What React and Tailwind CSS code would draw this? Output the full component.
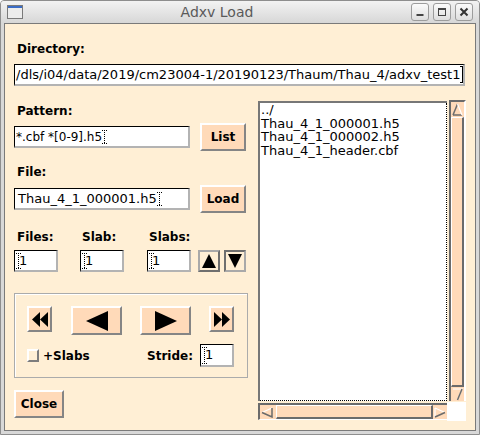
import React from "react";

// Tk-ish colours: PapayaWhip background, PeachPuff buttons
const raised =
  "bg-[#ffdab9] border-2 border-t-white border-l-white border-r-[#858585] border-b-[#858585]";
const sunkenInput =
  "bg-white border-t border-l border-r-2 border-b-2 border-t-black border-l-black border-r-[#b3b3b3] border-b-[#b3b3b3]";

function Cursor({ dotted, h = 14 }) {
  return (
    <svg width="5" height={h} viewBox={`0 0 5 ${h}`} className="shrink-0">
      <g stroke="#000" strokeWidth="1" strokeDasharray={dotted ? "1 1" : undefined}>
        <line x1="2.5" y1="0" x2="2.5" y2={h} />
        <line x1="0" y1="0.5" x2="5" y2="0.5" />
        <line x1="0" y1={h - 0.5} x2="5" y2={h - 0.5} />
      </g>
    </svg>
  );
}

function Label({ children, className = "" }) {
  return (
    <div className={`text-[12px] leading-[16px] font-bold text-black ${className}`}>
      {children}
    </div>
  );
}

function Btn({ children, className = "" }) {
  return (
    <div
      className={`${raised} flex items-center justify-center text-[12px] font-bold text-black ${className}`}
    >
      {children}
    </div>
  );
}

function SmallInput({ className = "" }) {
  return (
    <div className={`${sunkenInput} h-[22px] flex items-center pl-[1px] text-[13px] ${className}`}>
      <Cursor dotted h={16} />
      <span className="-ml-[2px]">1</span>
    </div>
  );
}

function TitleButton({ children }) {
  return (
    <div className="w-[18px] h-[18px] rounded-[3px] border border-[#9c9c9c] bg-gradient-to-b from-[#fbfbfb] to-[#dedede] flex items-center justify-center">
      {children}
    </div>
  );
}

export default function App() {
  return (
    <div className="w-[480px] h-[435px] flex flex-col bg-[#d8d8d8] border border-[#8e8e8e] rounded-t-[4px] overflow-hidden font-['DejaVu_Sans',sans-serif]">
      {/* title bar */}
      <div className="h-[22px] shrink-0 flex items-center bg-gradient-to-b from-[#f3f3f3] to-[#d7d7d7]">
        <svg width="16" height="14" viewBox="0 0 16 14" className="ml-[6px]">
          <rect x="0.5" y="0.5" width="15" height="13" fill="#ececec" stroke="#7a7a7a" />
          <rect x="1" y="1" width="14" height="2" fill="#3a6cc6" />
        </svg>
        <div className="flex-1 text-center text-[14px] leading-[22px] text-[#5a5a5a]">Adxv Load</div>
        <div className="flex items-center gap-[4px] mr-[6px]">
          <TitleButton>
            <svg width="10" height="10" viewBox="0 0 10 10">
              <rect x="1.5" y="7" width="7" height="2" fill="#444" />
            </svg>
          </TitleButton>
          <TitleButton>
            <svg width="10" height="10" viewBox="0 0 10 10">
              <rect x="1.5" y="1.5" width="7" height="7" fill="none" stroke="#444" />
              <rect x="1" y="1" width="8" height="2" fill="#444" />
            </svg>
          </TitleButton>
          <TitleButton>
            <svg width="10" height="10" viewBox="0 0 10 10">
              <path d="M1.5 1.5 L8.5 8.5 M8.5 1.5 L1.5 8.5" stroke="#333" strokeWidth="2" />
            </svg>
          </TitleButton>
        </div>
      </div>

      {/* window body */}
      <div className="flex-1 px-[3px] pb-[3px] flex">
        <div className="flex-1 border border-[#7a7a7a] bg-[#ffefd5] pl-[9px]">
          <Label className="mt-[17px] ml-[3px]">Directory:</Label>
          <div className={`${sunkenInput} mt-[7px] w-[451px] h-[22px] flex items-center pl-[1px] text-[13px] text-black whitespace-nowrap overflow-hidden`}>
            <span>/dls/i04/data/2019/cm23004-1/20190123/Thaum/Thau_4/adxv_test1</span>
            <Cursor h={17} />
          </div>

          <div className="mt-[15px] flex">
            {/* left column */}
            <div className="w-[234px]">
              <Label className="mt-[2px] ml-[3px]">Pattern:</Label>
              <div className="mt-[4px] h-[28px] flex items-center">
                <div className={`${sunkenInput} w-[176px] h-[22px] flex items-center pl-[1px] text-[12px]`}>
                  <span>*.cbf *[0-9].h5</span>
                  <Cursor dotted />
                </div>
                <Btn className="ml-[10px] w-[46px] h-[28px]">List</Btn>
              </div>

              <Label className="mt-[13px] ml-[3px]">File:</Label>
              <div className="mt-[5px] h-[28px] flex items-center">
                <div className={`${sunkenInput} w-[176px] h-[22px] flex items-center pl-[3px] text-[13px]`}>
                  <span>Thau_4_1_000001.h5</span>
                  <Cursor dotted />
                </div>
                <Btn className="ml-[10px] w-[46px] h-[28px]">Load</Btn>
              </div>

              <div className="mt-[16px] flex text-[12px] leading-[16px] font-bold">
                <span className="w-[68px] pl-[3px]">Files:</span>
                <span className="w-[67px]">Slab:</span>
                <span>Slabs:</span>
              </div>
              <div className="mt-[5px] h-[22px] flex items-center">
                <SmallInput className="w-[44px]" />
                <SmallInput className="w-[44px] ml-[22px]" />
                <SmallInput className="w-[44px] ml-[23px]" />
                <div className="ml-[7px] w-[22px] h-[22px] bg-[#ffefd5] border-2 border-t-[#a9a9a9] border-l-[#a9a9a9] border-r-[#6f6f6f] border-b-[#6f6f6f] flex items-center justify-center">
                  <svg width="14" height="14" viewBox="0 0 14 14">
                    <polygon points="7,0 0,14 14,14" fill="#000" />
                  </svg>
                </div>
                <div className="ml-[4px] w-[22px] h-[22px] bg-[#ffefd5] border-2 border-t-[#6f6f6f] border-l-[#6f6f6f] border-r-[#a9a9a9] border-b-[#a9a9a9] flex items-center justify-center">
                  <svg width="14" height="14" viewBox="0 0 14 14">
                    <polygon points="0,0 14,0 7,14" fill="#000" />
                  </svg>
                </div>
              </div>

              {/* navigation group */}
              <div className="mt-[21px] h-[85px] border border-[#ababab] shadow-[inset_1px_1px_0_#ffffff] pt-[12px] pl-[12px]">
                <div className="flex items-start">
                  <Btn className="w-[25px] h-[26px]">
                    <svg width="16" height="15" viewBox="0 0 16 15">
                      <polygon points="8,0 0,7.5 8,15" fill="#000" />
                      <polygon points="16,0 8,7.5 16,15" fill="#000" />
                    </svg>
                  </Btn>
                  <Btn className="ml-[19px] w-[51px] h-[29px]">
                    <svg width="22" height="20" viewBox="0 0 22 20">
                      <polygon points="22,0 0,10 22,20" fill="#000" />
                    </svg>
                  </Btn>
                  <Btn className="ml-[18px] w-[51px] h-[29px]">
                    <svg width="22" height="20" viewBox="0 0 22 20">
                      <polygon points="0,0 22,10 0,20" fill="#000" />
                    </svg>
                  </Btn>
                  <Btn className="ml-[18px] w-[25px] h-[26px]">
                    <svg width="16" height="15" viewBox="0 0 16 15">
                      <polygon points="0,0 8,7.5 0,15" fill="#000" />
                      <polygon points="8,0 16,7.5 8,15" fill="#000" />
                    </svg>
                  </Btn>
                </div>
                <div className="mt-[9px] h-[23px] flex items-center text-[12px] font-bold">
                  <div className="w-[12px] h-[13px] bg-[#ffefd5] border-2 border-t-white border-l-white border-r-[#7d7d7d] border-b-[#7d7d7d]" />
                  <span className="ml-[4px] w-[104px]">+Slabs</span>
                  <span className="w-[53px]">Stride:</span>
                  <div className={`${sunkenInput} w-[34px] h-[23px] flex items-center pl-[1px] text-[13px] font-normal`}>
                    <Cursor dotted h={17} />
                    <span className="-ml-[2px]">1</span>
                  </div>
                </div>
              </div>

              <Btn className="mt-[12px] w-[50px] h-[28px]">Close</Btn>
            </div>

            {/* file list with scrollbars */}
            <div className="ml-[10px] flex flex-col">
              <div className="flex">
                <div className="w-[189px] h-[300px] bg-white border-l-2 border-t-2 border-[#777777]">
                  <div className="h-full border-r border-b border-dotted border-black pl-[1px] text-[13px] leading-[13.5px] text-black">
                    <div>../</div>
                    <div>Thau_4_1_000001.h5</div>
                    <div>Thau_4_1_000002.h5</div>
                    <div>Thau_4_1_header.cbf</div>
                  </div>
                </div>
                <div className="ml-[2px] w-[17px] h-[301px] -mt-[1px] flex flex-col bg-[#ffdab9] border-l-2 border-t-2 border-[#6b6b6b] border-r-2 border-r-white">
                  <div className="h-[15px] flex items-center justify-center">
                    <svg width="11" height="13" viewBox="0 0 11 13">
                      <path d="M5.5 1 L1 12" stroke="#6b6b6b" strokeWidth="1.5" />
                      <path d="M1 12 L10 12" stroke="#6b6b6b" strokeWidth="1.5" />
                      <path d="M5.5 1 L10 12" stroke="#ffffff" strokeWidth="1.2" />
                    </svg>
                  </div>
                  <div className="flex-1 border-l border-t border-white border-r-2 border-b-2 border-r-[#6b6b6b] border-b-[#6b6b6b]" />
                  <div className="h-[14px] flex items-center justify-center">
                    <svg width="11" height="13" viewBox="0 0 11 13">
                      <path d="M1 1 L10 1 L5.5 12" fill="none" stroke="#ffffff" strokeWidth="1.2" />
                      <path d="M10 1 L5.5 12" stroke="#6b6b6b" strokeWidth="1.5" />
                    </svg>
                  </div>
                </div>
              </div>
              <div className="mt-[2px] flex">
                <div className="w-[189px] h-[17px] flex bg-[#ffdab9] border-t-2 border-l-2 border-[#6b6b6b] border-b border-b-white">
                  <div className="w-[14px] flex items-center justify-center">
                    <svg width="12" height="11" viewBox="0 0 12 11">
                      <path d="M1 5.5 L11 1" stroke="#ffffff" strokeWidth="1.2" />
                      <path d="M1 5.5 L11 10 L11 1" fill="none" stroke="#6b6b6b" strokeWidth="1.5" />
                    </svg>
                  </div>
                  <div className="flex-1 ml-[2px] border-l border-t border-white border-r-2 border-b-2 border-r-[#6b6b6b] border-b-[#6b6b6b]" />
                  <div className="w-[14px] flex items-center justify-center">
                    <svg width="12" height="11" viewBox="0 0 12 11">
                      <path d="M1 1 L1 10 M1 1 L11 5.5" fill="none" stroke="#ffffff" strokeWidth="1.2" />
                      <path d="M11 5.5 L1 10" stroke="#6b6b6b" strokeWidth="1.5" />
                    </svg>
                  </div>
                </div>
                <div className="w-[19px] h-[19px] bg-white -mt-[1px]" />
              </div>
            </div>
          </div>
        </div>
      </div>
    </div>
  );
}
